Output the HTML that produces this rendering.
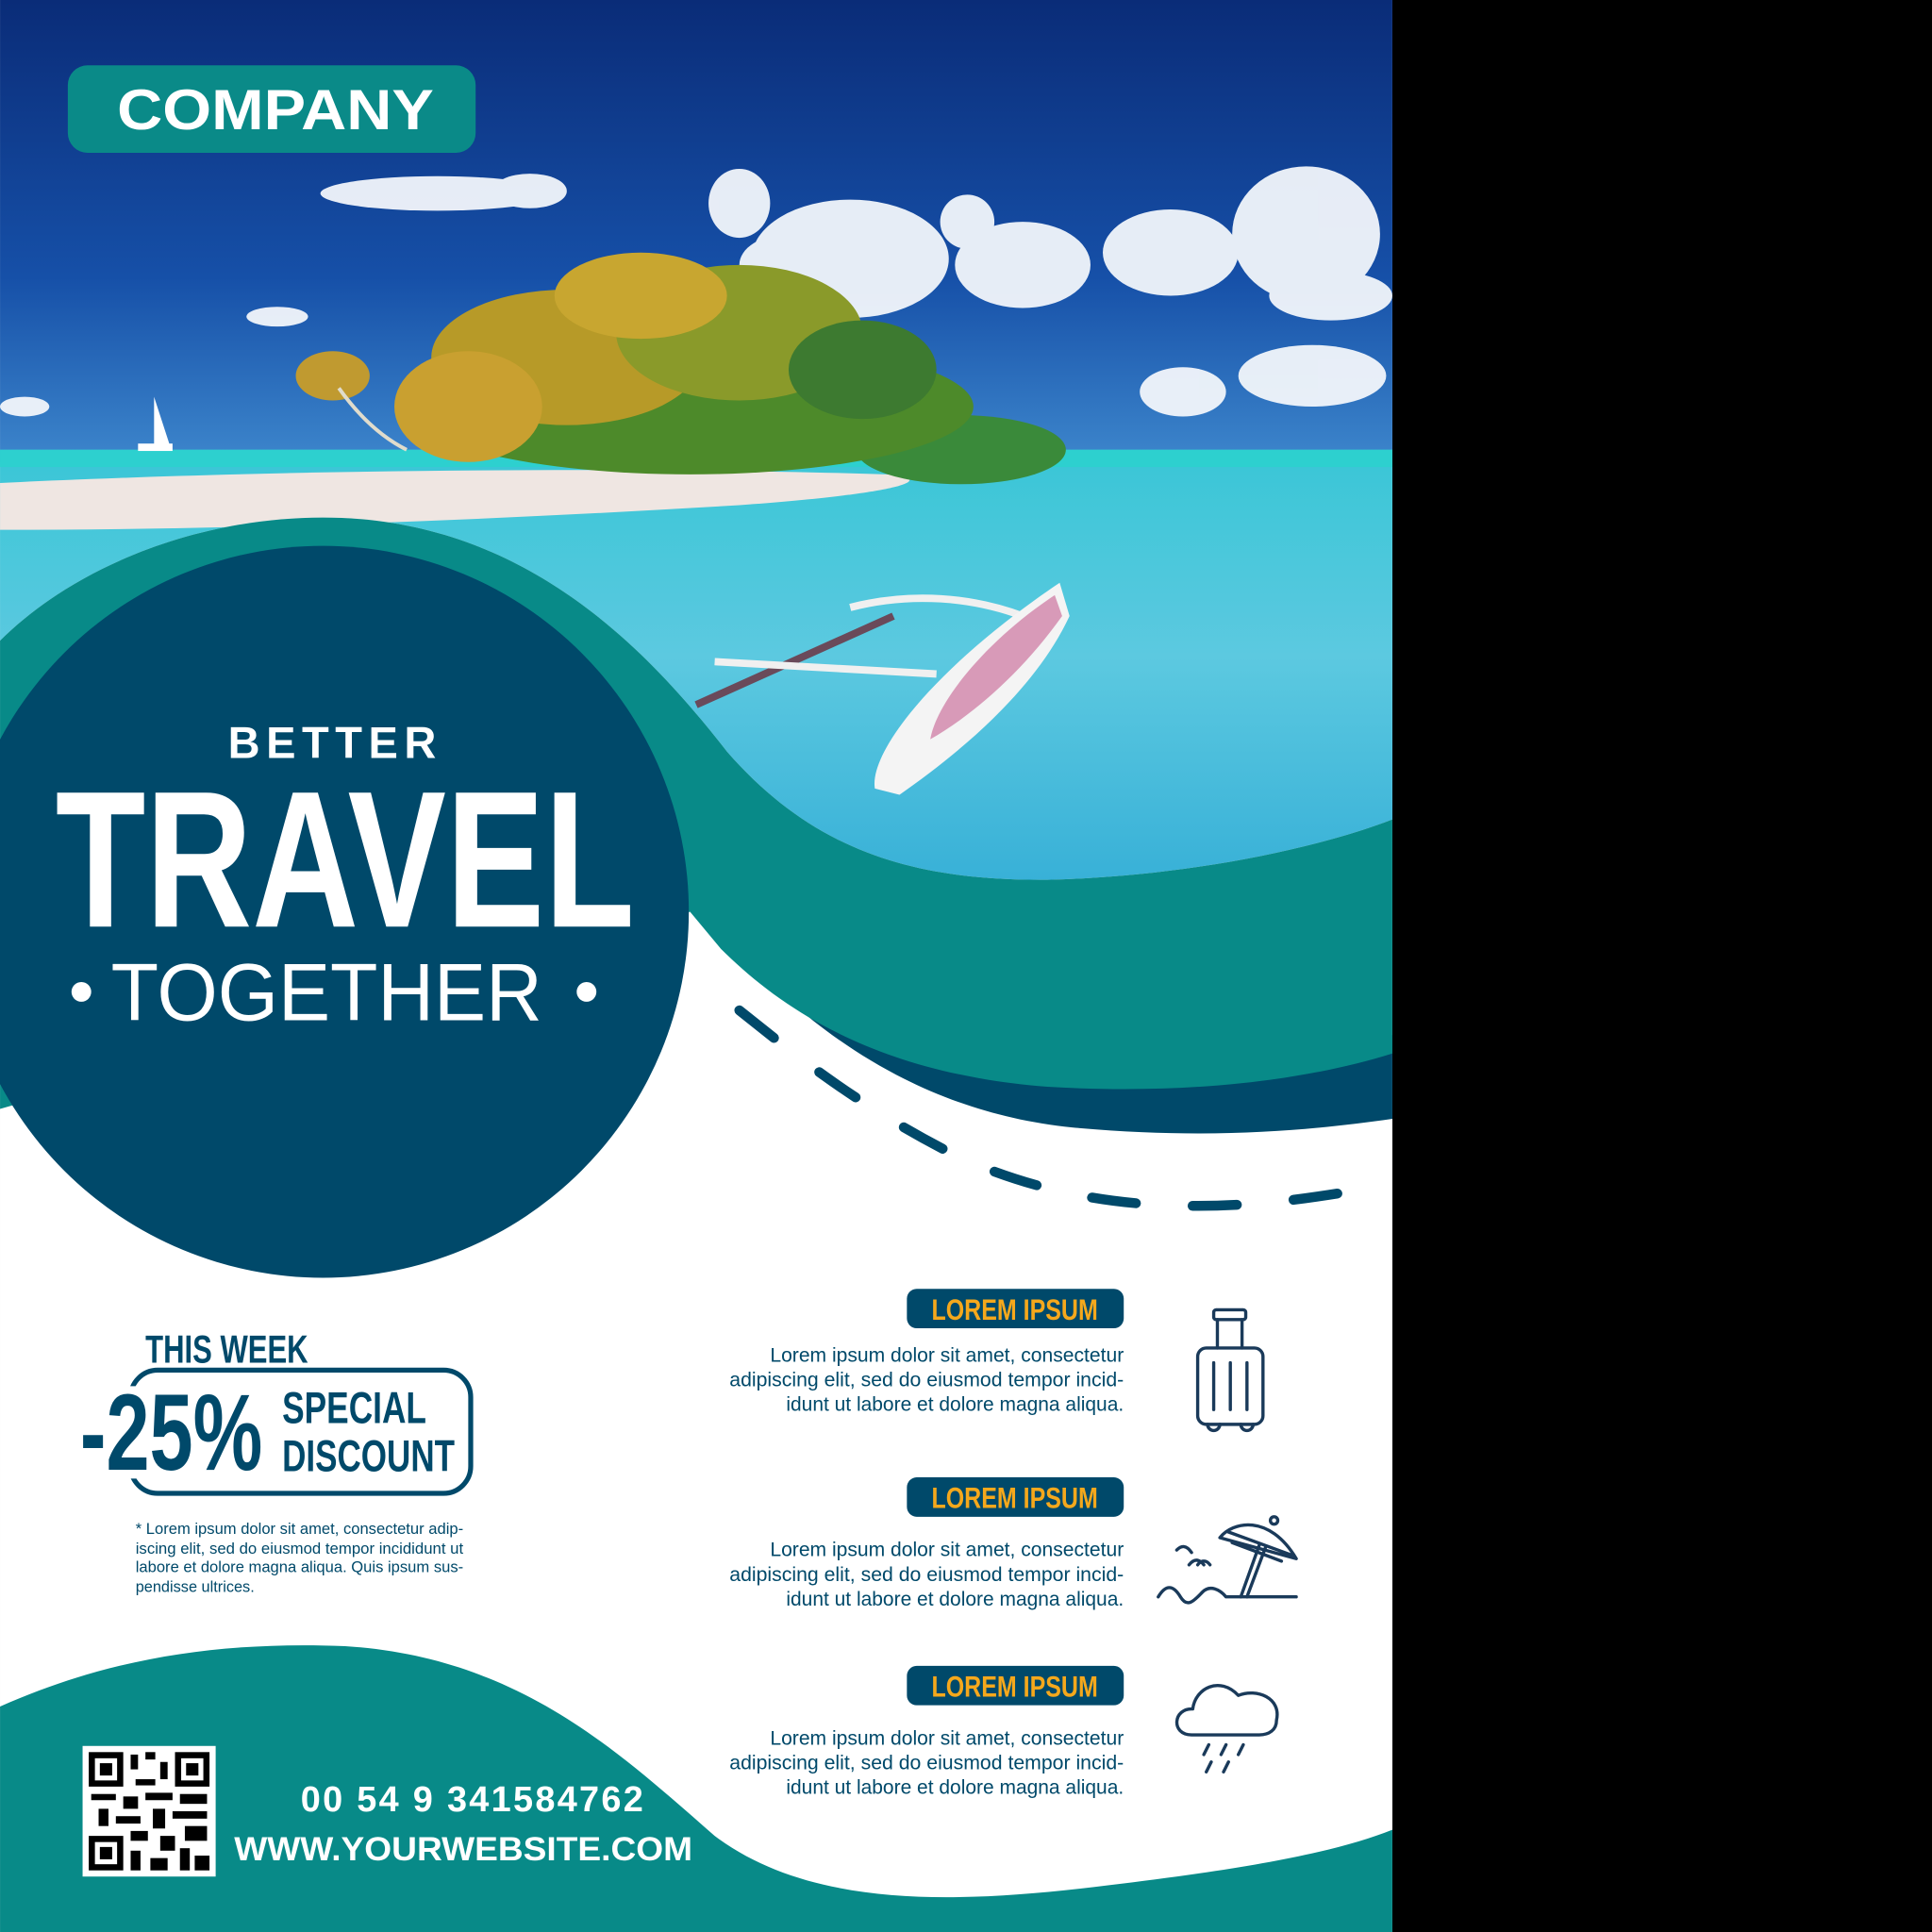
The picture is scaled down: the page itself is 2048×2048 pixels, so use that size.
<!DOCTYPE html>
<html><head><meta charset="utf-8"><style>
html,body{margin:0;padding:0;background:#000;width:2048px;height:2048px;overflow:hidden}
svg{display:block}
text{font-family:"Liberation Sans",sans-serif}
</style></head><body>
<svg width="1476" height="2048" viewBox="0 0 1130 1568" xmlns="http://www.w3.org/2000/svg">
<defs>
<linearGradient id="sky" x1="0" y1="0" x2="0" y2="1">
<stop offset="0" stop-color="#0a2c78"/><stop offset="0.6" stop-color="#1650a8"/><stop offset="1" stop-color="#3d86cc"/>
</linearGradient>
<linearGradient id="sea" x1="0" y1="0" x2="0" y2="1">
<stop offset="0" stop-color="#39c6d6"/><stop offset="0.4" stop-color="#5cc9e0"/><stop offset="1" stop-color="#2aa7d4"/>
</linearGradient>
</defs>
<rect width="1130" height="1568" fill="#fff"/>
<rect width="1130" height="375" fill="url(#sky)"/>
<rect y="365" width="1130" height="420" fill="url(#sea)"/>
<rect y="365" width="1130" height="14" fill="#2dd0cf"/>
<g fill="#f2f6fb" opacity="0.95">
<ellipse cx="355" cy="157" rx="95" ry="14"/><ellipse cx="430" cy="155" rx="30" ry="14"/>
<ellipse cx="600" cy="165" rx="25" ry="28"/><ellipse cx="690" cy="210" rx="80" ry="48"/><ellipse cx="640" cy="215" rx="40" ry="25"/>
<ellipse cx="830" cy="215" rx="55" ry="35"/><ellipse cx="785" cy="180" rx="22" ry="22"/>
<ellipse cx="950" cy="205" rx="55" ry="35"/><ellipse cx="1060" cy="190" rx="60" ry="55"/><ellipse cx="1080" cy="240" rx="50" ry="20"/>
<ellipse cx="960" cy="318" rx="35" ry="20"/><ellipse cx="1065" cy="305" rx="60" ry="25"/>
<ellipse cx="225" cy="257" rx="25" ry="8"/><ellipse cx="20" cy="330" rx="20" ry="8"/>
</g>
<path d="M0,392 C200,382 500,378 720,385 C760,388 740,400 600,410 C400,422 200,430 0,430Z" fill="#efe6e2"/>
<g>
<ellipse cx="780" cy="365" rx="85" ry="28" fill="#3a8a3a"/>
<ellipse cx="560" cy="330" rx="230" ry="55" fill="#4d8a2a"/>
<ellipse cx="460" cy="290" rx="110" ry="55" fill="#b79a28"/>
<ellipse cx="600" cy="270" rx="100" ry="55" fill="#8a9a2a"/>
<ellipse cx="520" cy="240" rx="70" ry="35" fill="#c8a630"/>
<ellipse cx="380" cy="330" rx="60" ry="45" fill="#c9a030"/>
<ellipse cx="700" cy="300" rx="60" ry="40" fill="#3d7a30"/>
<ellipse cx="270" cy="305" rx="30" ry="20" fill="#c09a30"/>
<path d="M275,315 Q300,350 330,365" stroke="#e0dccc" stroke-width="3" fill="none"/>
<path d="M125,322 L125,362 L138,362Z" fill="#fff"/>
<rect x="112" y="360" width="28" height="6" fill="#fff"/>
</g>
<path d="M565,572 L725,500" stroke="#6a4a5a" stroke-width="6"/>
<path d="M580,537 L760,547" stroke="#f0f0f0" stroke-width="6"/>
<path d="M690,493 C740,480 790,485 830,500" stroke="#f0f0f0" stroke-width="6" fill="none"/>
<path d="M860,473 L868,500 C840,560 780,610 730,645 L710,640 C705,610 760,540 860,473Z" fill="#f4f4f4"/>
<path d="M856,483 L862,500 C830,545 790,580 755,600 C760,570 800,520 856,483Z" fill="#d89ab8"/>
<!-- white below photo -->
<path d="M0,520 C60,460 160,420 262,420 C420,420 520,520 590,610 C660,690 740,715 850,714 C950,712 1060,692 1130,665 L1130,1568 L0,1568Z" fill="#fff"/>
<!-- navy band -->
<path d="M562,725 C620,805 720,900 870,915 C980,925 1060,918 1130,908 L1130,840 C1050,862 950,872 850,866 C720,858 640,808 585,745Z" fill="#00496a"/>
<!-- teal shape -->
<path d="M0,520 C60,460 160,420 262,420 C420,420 520,520 590,610 C660,690 740,715 850,714 C950,712 1060,692 1130,665 L1130,855 C1050,880 950,888 850,882 C720,872 640,825 585,770 L560,740 L0,900Z" fill="#088a88"/>
<path d="M600,820 C650,860 700,900 780,940 C860,975 940,985 1040,975 C1080,970 1110,965 1130,960" stroke="#00496a" stroke-width="8" fill="none" stroke-dasharray="36 46" stroke-linecap="round"/>
<circle cx="262" cy="740" r="297" fill="#00496a"/>
<text x="272" y="615" text-anchor="middle" font-size="36" font-weight="bold" fill="#fff" letter-spacing="5">BETTER</text>
<text x="45" y="752" font-size="158" font-weight="bold" fill="#fff" textLength="470" lengthAdjust="spacingAndGlyphs">TRAVEL</text>
<text x="90" y="828" font-size="66" fill="#fff" textLength="350" lengthAdjust="spacingAndGlyphs">TOGETHER</text>
<circle cx="66" cy="805" r="8" fill="#fff"/><circle cx="476" cy="805" r="8" fill="#fff"/>
<rect x="55" y="53" width="331" height="71" rx="16" fill="#0a8a88"/>
<text x="95" y="105" font-size="46" font-weight="bold" fill="#fff" textLength="257" lengthAdjust="spacingAndGlyphs">COMPANY</text>
<text x="118" y="1106" font-size="32" font-weight="bold" fill="#00496a" textLength="132" lengthAdjust="spacingAndGlyphs">THIS WEEK</text>
<rect x="106" y="1112" width="276" height="100" rx="22" fill="none" stroke="#00496a" stroke-width="4"/>
<rect x="60" y="1125" width="60" height="75" fill="#fff"/>
<text x="65" y="1193" font-size="88" font-weight="bold" fill="#00496a" textLength="148" lengthAdjust="spacingAndGlyphs">-25%</text>
<text x="229" y="1155" font-size="36" font-weight="bold" fill="#00496a" textLength="117" lengthAdjust="spacingAndGlyphs">SPECIAL</text>
<text x="229" y="1194" font-size="36" font-weight="bold" fill="#00496a" textLength="140" lengthAdjust="spacingAndGlyphs">DISCOUNT</text>
<g font-size="12.5" fill="#00496a">
<text x="110" y="1245" textLength="266" lengthAdjust="spacingAndGlyphs">* Lorem ipsum dolor sit amet, consectetur adip-</text>
<text x="110" y="1261" textLength="266" lengthAdjust="spacingAndGlyphs">iscing elit, sed do eiusmod tempor incididunt ut</text>
<text x="110" y="1276" textLength="266" lengthAdjust="spacingAndGlyphs">labore et dolore magna aliqua. Quis ipsum sus-</text>
<text x="110" y="1292">pendisse ultrices.</text>
</g>
<g>
<rect x="736" y="1046" width="176" height="32" rx="8" fill="#00496a"/>
<text x="756" y="1071" font-size="24" font-weight="bold" fill="#f5a81c" textLength="135" lengthAdjust="spacingAndGlyphs">LOREM IPSUM</text>
<rect x="736" y="1199" width="176" height="32" rx="8" fill="#00496a"/>
<text x="756" y="1224" font-size="24" font-weight="bold" fill="#f5a81c" textLength="135" lengthAdjust="spacingAndGlyphs">LOREM IPSUM</text>
<rect x="736" y="1352" width="176" height="32" rx="8" fill="#00496a"/>
<text x="756" y="1377" font-size="24" font-weight="bold" fill="#f5a81c" textLength="135" lengthAdjust="spacingAndGlyphs">LOREM IPSUM</text>
</g>
<g font-size="16" fill="#00496a" text-anchor="end">
<text x="912" y="1105" textLength="287" lengthAdjust="spacingAndGlyphs">Lorem ipsum dolor sit amet, consectetur</text>
<text x="912" y="1125" textLength="320" lengthAdjust="spacingAndGlyphs">adipiscing elit, sed do eiusmod tempor incid-</text>
<text x="912" y="1145" textLength="274" lengthAdjust="spacingAndGlyphs">idunt ut labore et dolore magna aliqua.</text>
<text x="912" y="1263" textLength="287" lengthAdjust="spacingAndGlyphs">Lorem ipsum dolor sit amet, consectetur</text>
<text x="912" y="1283" textLength="320" lengthAdjust="spacingAndGlyphs">adipiscing elit, sed do eiusmod tempor incid-</text>
<text x="912" y="1303" textLength="274" lengthAdjust="spacingAndGlyphs">idunt ut labore et dolore magna aliqua.</text>
<text x="912" y="1416" textLength="287" lengthAdjust="spacingAndGlyphs">Lorem ipsum dolor sit amet, consectetur</text>
<text x="912" y="1436" textLength="320" lengthAdjust="spacingAndGlyphs">adipiscing elit, sed do eiusmod tempor incid-</text>
<text x="912" y="1456" textLength="274" lengthAdjust="spacingAndGlyphs">idunt ut labore et dolore magna aliqua.</text>
</g>
<g fill="none" stroke="#1a3a5a" stroke-width="2.6" stroke-linecap="round" stroke-linejoin="round">
<rect x="972" y="1094" width="53" height="62" rx="7"/>
<rect x="985" y="1063" width="26" height="8" rx="2"/>
<path d="M988,1071 V1094 M1008,1071 V1094 M985,1106 V1144 M998.5,1106 V1144 M1012,1106 V1144"/>
<path d="M980,1156 a5,5 0 0 0 10,0 M1007,1156 a5,5 0 0 0 10,0"/>
<path d="M990,1248 C1000,1235 1030,1228 1052,1265 Z M996,1243 L1048,1262 M1000,1252 L1040,1267"/>
<circle cx="1034" cy="1234" r="3"/>
<path d="M1027,1256 L1012,1296 M1022,1254 L1007,1296"/>
<path d="M940,1296 C946,1286 952,1286 958,1296 C964,1306 970,1298 976,1292 C982,1286 990,1290 995,1296 L1052,1296"/>
<path d="M955,1258 c4,-4 8,-4 12,2 M965,1270 c4,-5 8,-5 12,0 M972,1270 c3,-4 7,-4 10,0"/>
<path d="M967,1408 C950,1408 952,1386 968,1387 C970,1370 990,1360 1005,1376 C1020,1370 1040,1378 1036,1396 C1036,1404 1030,1408 1022,1408 Z"/>
<path d="M981,1416 L977,1424 M995,1416 L991,1424 M1009,1416 L1005,1424 M983,1430 L979,1438 M997,1430 L993,1438"/>
</g>
<path d="M0,1385 C90,1345 180,1332 280,1336 C420,1345 500,1420 580,1490 C660,1550 780,1545 900,1530 C1000,1518 1080,1505 1130,1485 L1130,1568 L0,1568Z" fill="#088a88"/>
<rect x="67" y="1417" width="108" height="106" fill="#fff"/>
<g fill="#000">
<rect x="72" y="1422" width="28" height="28"/><rect x="77" y="1427" width="18" height="18" fill="#fff"/><rect x="81" y="1431" width="10" height="10"/>
<rect x="142" y="1422" width="28" height="28"/><rect x="147" y="1427" width="18" height="18" fill="#fff"/><rect x="151" y="1431" width="10" height="10"/>
<rect x="72" y="1490" width="28" height="28"/><rect x="77" y="1495" width="18" height="18" fill="#fff"/><rect x="81" y="1499" width="10" height="10"/>
<rect x="106" y="1424" width="6" height="12"/><rect x="118" y="1422" width="8" height="6"/><rect x="130" y="1430" width="6" height="14"/>
<rect x="110" y="1444" width="16" height="5"/><rect x="74" y="1456" width="20" height="5"/><rect x="100" y="1458" width="12" height="10"/>
<rect x="118" y="1455" width="22" height="6"/><rect x="146" y="1456" width="22" height="8"/><rect x="80" y="1468" width="8" height="14"/>
<rect x="94" y="1474" width="20" height="6"/><rect x="124" y="1468" width="10" height="16"/><rect x="140" y="1470" width="28" height="6"/>
<rect x="106" y="1486" width="14" height="8"/><rect x="130" y="1490" width="12" height="12"/><rect x="150" y="1482" width="18" height="12"/>
<rect x="106" y="1502" width="8" height="16"/><rect x="122" y="1508" width="14" height="10"/><rect x="146" y="1500" width="8" height="18"/><rect x="158" y="1506" width="12" height="12"/>
</g>
<text x="244" y="1470" font-size="29" font-weight="bold" fill="#fff" textLength="278" lengthAdjust="spacing">00 54 9 341584762</text>
<text x="190" y="1510" font-size="27" font-weight="bold" fill="#fff" textLength="372" lengthAdjust="spacingAndGlyphs">WWW.YOURWEBSITE.COM</text>
</svg>
</body></html>
